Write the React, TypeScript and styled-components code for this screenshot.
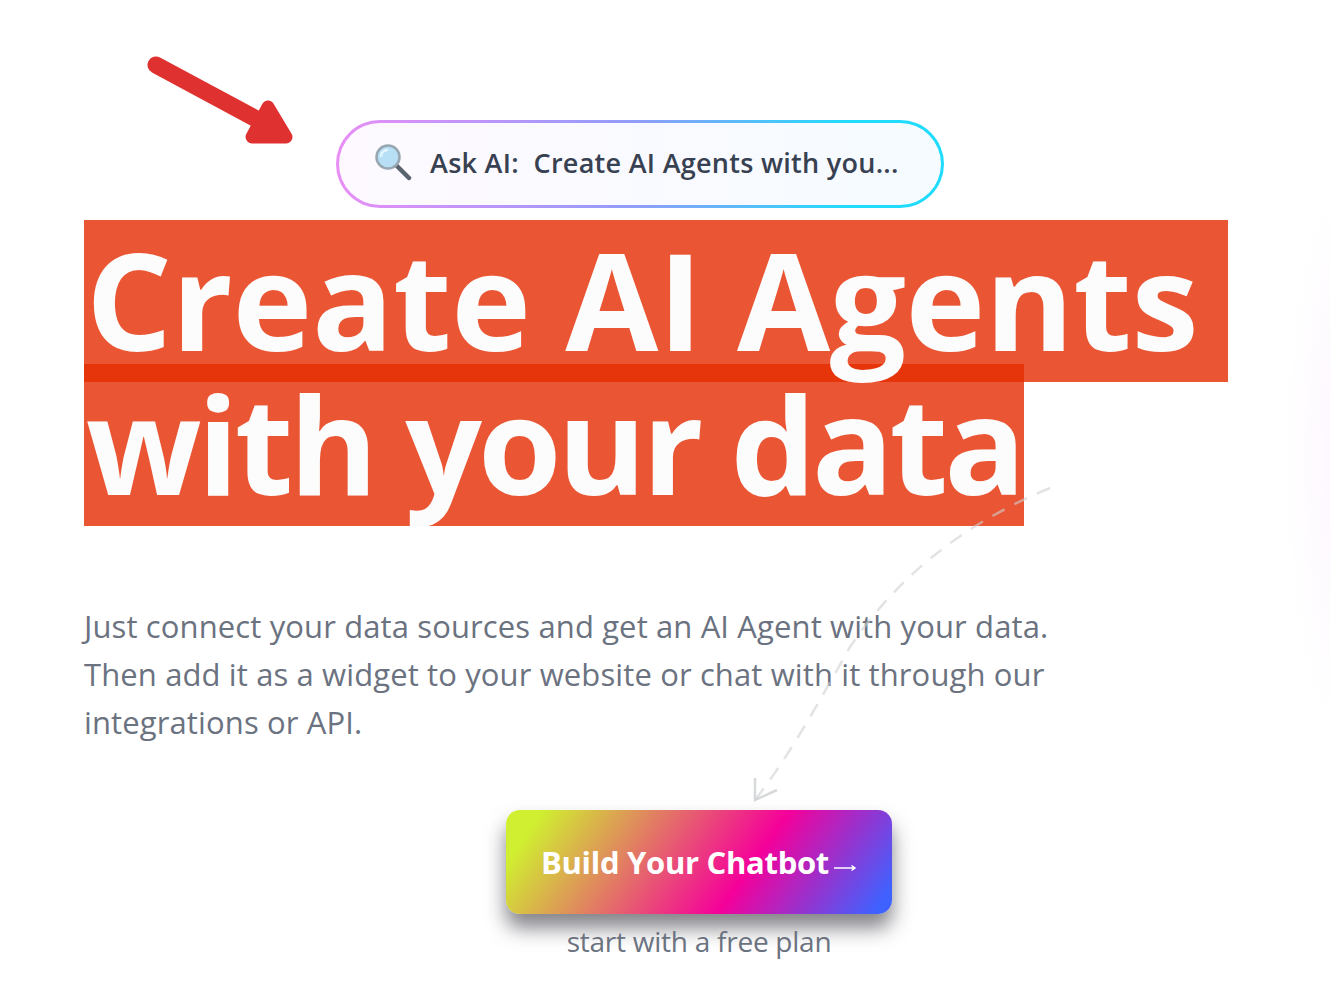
import React from "react";
import styled, { createGlobalStyle } from "styled-components";

const GlobalStyle = createGlobalStyle`
    * {
        box-sizing: border-box;
    }
    html, body {
        margin: 0;
        padding: 0;
        background: #fff;
        font-family: "Open Sans", "Noto Sans", sans-serif;
    }
`;

const Page = styled.div`
    position: relative;
    width: 1330px;
    height: 994px;
    overflow: hidden;
    padding: 120px 0 0 84px;
    background: radial-gradient(ellipse 60px 280px at 1345px 460px, #fdf6ff 0%, #ffffff 100%);
`;

const AskBox = styled.div`
    display: flex;
    align-items: center;
    gap: 18px;
    width: 608px;
    height: 88px;
    margin-left: 252px;
    padding: 0 0 4px 35px;
    border: 3px solid transparent;
    border-radius: 44px;
    background:
        linear-gradient(90deg, #fdf9ff, #f5fbff) padding-box,
        linear-gradient(90deg, #e88ef5 0%, #8f9dfb 50%, #1fdcff 85%) border-box;
    color: #374151;
    font-size: 27px;
    font-weight: 600;
    letter-spacing: 0.28px;
    white-space: pre;
`;

const Heading = styled.h1`
    margin: 12px 0 0;
    font-size: 135px;
    font-weight: 700;
    color: #fcfcfc;
`;

const HeadingLine = styled.span<{ $width: number; $spacing: number }>`
    display: block;
    width: ${(p) => p.$width}px;
    height: 162px;
    padding-left: 2px;
    line-height: 158px;
    letter-spacing: ${(p) => p.$spacing}px;
    white-space: nowrap;
    background: rgba(229, 44, 1, 0.8);

    & + & {
        margin-top: -18px;
    }
`;

const Description = styled.p`
    width: 1000px;
    margin: 76px 0 0;
    font-size: 31px;
    line-height: 48px;
    letter-spacing: 0.12px;
    white-space: nowrap;
    color: #6b7280;
`;

const Cta = styled.div`
    display: flex;
    flex-direction: column;
    align-items: center;
    width: 386px;
    margin: 64px 0 0 422px;
`;

const BuildButton = styled.button`
    display: flex;
    align-items: center;
    justify-content: center;
    gap: 5px;
    width: 100%;
    height: 104px;
    padding: 0;
    border: none;
    border-radius: 14px;
    background: linear-gradient(125deg, #d0ef30 8%, #f5009a 62%, #3f62ff 96%);
    box-shadow: 0 14px 20px rgba(30, 30, 40, 0.55);
    color: #fff;
    font-family: "Open Sans", sans-serif;
    font-size: 31px;
    font-weight: 700;
    letter-spacing: -0.3px;
`;

const ButtonArrow = styled.svg`
    width: 23px;
    height: 12px;
    margin-top: 12px;
`;

const FreePlan = styled.span`
    margin-top: 8px;
    font-size: 28px;
    line-height: 38px;
    letter-spacing: -0.25px;
    color: #6b7280;
`;

const Overlay = styled.svg`
    position: absolute;
    left: 0;
    top: 0;
    width: 1330px;
    height: 994px;
    pointer-events: none;
`;

const SearchIcon = () => (
    <svg width="38" height="38" viewBox="0 0 38 38">
        <line x1="22" y1="22" x2="35" y2="35" stroke="#59636e" strokeWidth="4.5" strokeLinecap="round" />
        <circle cx="14" cy="14" r="11.5" fill="#b7e0f6" stroke="#97a6b1" strokeWidth="2.5" />
        <path d="M7 13a7 7 0 0 1 6-6" fill="none" stroke="#e4f5fd" strokeWidth="2.5" strokeLinecap="round" />
    </svg>
);

export default function App() {
    return (
        <Page>
            <GlobalStyle />
            <AskBox>
                <SearchIcon />
                <span>Ask AI:  Create AI Agents with you...</span>
            </AskBox>
            <Heading>
                <HeadingLine $width={1144} $spacing={-0.4}>Create AI Agents</HeadingLine>
                <HeadingLine $width={940} $spacing={-4}>with your data</HeadingLine>
            </Heading>
            <Description>
                Just connect your data sources and get an AI Agent with your data.
                <br />
                Then add it as a widget to your website or chat with it through our
                <br />
                integrations or API.
            </Description>
            <Cta>
                <BuildButton>
                    Build Your Chatbot
                    <ButtonArrow viewBox="0 0 23 12">
                        <path d="M0 6h21M17.5 3.5l3.5 2.5-3.5 2.5" fill="none" stroke="#fff" strokeWidth="1.4" />
                    </ButtonArrow>
                </BuildButton>
                <FreePlan>start with a free plan</FreePlan>
            </Cta>
            <Overlay viewBox="0 0 1330 994">
                <path d="M156 65L262 122" stroke="#e03131" strokeWidth="17" strokeLinecap="round" />
                <path d="M268 107L286 137L252 137Z" fill="#e03131" stroke="#e03131" strokeWidth="13" strokeLinejoin="round" />
                <path
                    d="M1050 488C960 525 895 580 850 647C820 700 790 755 755 800"
                    fill="none"
                    stroke="rgba(205,208,210,0.6)"
                    strokeWidth="2.5"
                    strokeDasharray="14 11"
                />
                <path d="M755 778L755 800L777 790" fill="none" stroke="rgba(205,208,210,0.8)" strokeWidth="2.5" />
            </Overlay>
        </Page>
    );
}
